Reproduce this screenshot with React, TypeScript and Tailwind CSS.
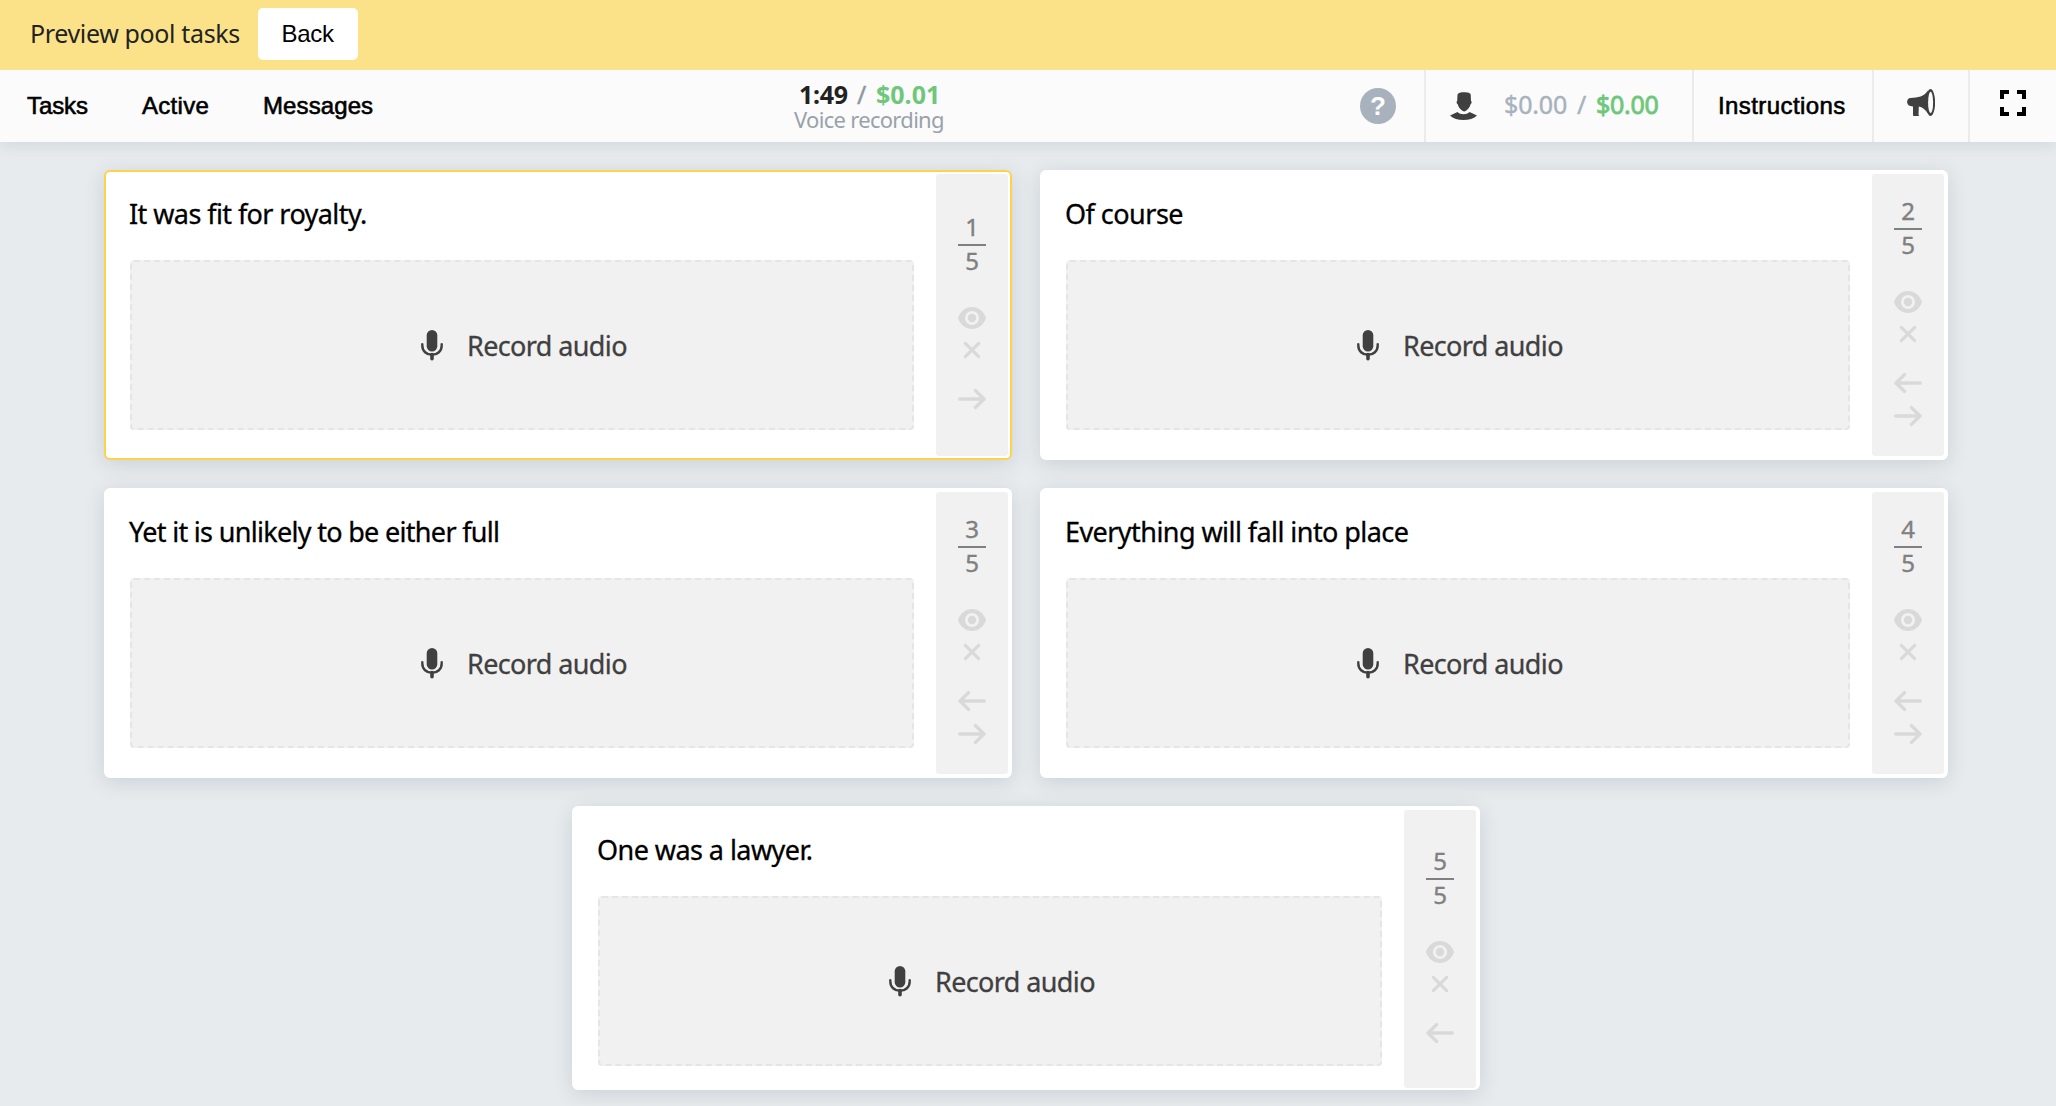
const sans = "font-['Noto_Sans',sans-serif]";
const helv = "font-['Liberation_Sans',Arial,sans-serif]";

type Task = {
  text: string;
  tracking: string;
  size: string;
  railPad: string;
  active?: boolean;
  prev?: boolean;
  next?: boolean;
};

const tasks: Task[] = [
  { text: 'It was fit for royalty.', tracking: 'tracking-[-0.58px]', size: 'h-[290px]', railPad: 'pt-[38px]', active: true, next: true },
  { text: 'Of course', tracking: 'tracking-[-0.52px]', size: 'h-[290px]', railPad: 'pt-[22px]', prev: true, next: true },
  { text: 'Yet it is unlikely to be either full', tracking: 'tracking-[-0.69px]', size: 'h-[290px]', railPad: 'pt-[22px]', prev: true, next: true },
  { text: 'Everything will fall into place', tracking: 'tracking-[-0.56px]', size: 'h-[290px]', railPad: 'pt-[22px]', prev: true, next: true },
  { text: 'One was a lawyer.', tracking: 'tracking-[-0.56px]', size: 'h-[284px]', railPad: 'pt-[36px]', prev: true },
];

function Eye() {
  return (
    <svg width="28" height="22" viewBox="0 0 28 22" fill="#d9d9d9">
      <path d="M0 11C2.200 4.200 7.600 0 14 0s11.800 4.200 14 11c-2.200 6.800-7.600 11-14 11S2.200 17.800 0 11z" />
      <circle cx="14" cy="11" r="7" fill="#f1f1f1" />
      <circle cx="14" cy="11" r="4.200" />
    </svg>
  );
}

function Cross() {
  return (
    <svg width="18" height="18" viewBox="0 0 18 18" stroke="#d9d9d9" strokeWidth="3.100" strokeLinecap="round">
      <path d="M2.300 2.300 15.700 15.700M15.700 2.300 2.300 15.700" />
    </svg>
  );
}

function Arrow({ left }: { left?: boolean }) {
  return (
    <svg
      width="28"
      height="22"
      viewBox="0 0 28 22"
      fill="none"
      stroke="#d9d9d9"
      strokeWidth="3.400"
      strokeLinecap="round"
      strokeLinejoin="round"
      className={left ? 'rotate-180' : ''}
    >
      <path d="M1.800 11H25.500M17.500 2.600 26 11 17.500 19.400" />
    </svg>
  );
}

function Mic() {
  return (
    <svg width="22" height="31" viewBox="0 0 22 31">
      <rect x="5.700" y="0" width="10.600" height="21.500" rx="5.300" fill="#404040" />
      <path d="M1.300 14.200v1.300c0 5.600 4.200 9.300 9.700 9.300s9.700-3.700 9.700-9.300v-1.300" fill="none" stroke="#404040" strokeWidth="2.400" strokeLinecap="round" />
      <path d="M11 24.500v4.300" stroke="#404040" strokeWidth="3.600" strokeLinecap="round" />
    </svg>
  );
}

function Card({ task, index }: { task: Task; index: number }) {
  return (
    <section
      className={`flex w-[908px] justify-between rounded-[6px] border-2 bg-white pl-6 pr-[2px] pt-[2px] shadow-[0_4px_20px_rgba(60,75,85,0.16)] ${task.size} ${task.active ? 'border-[#ffd24d] pb-[2px]' : index === 4 ? 'border-white' : 'border-white pb-[2px]'}`}
    >
      <div className="w-[784px] pt-6">
        <h2 className={`-ml-px h-8 whitespace-nowrap text-[27px] leading-8 text-black [-webkit-text-stroke:0.3px_#000] ${task.tracking}`}>{task.text}</h2>
        <button className="mt-[30px] flex h-[170px] w-full items-center rounded-[4px] border-2 border-dashed border-[#e5e5e5] bg-[#f1f1f1] pl-[289px] text-[#404040]">
          <Mic />
          <span className="ml-6 pt-[2px] text-[27px] leading-8 tracking-[-0.62px] [-webkit-text-stroke:0.3px_#404040]">Record audio</span>
        </button>
      </div>
      <aside className={`flex w-[72px] flex-col items-center rounded-[3px] bg-[#f1f1f1] ${task.railPad}`}>
        <div className="w-7 border-b-2 border-[#808080] pb-[2px] text-center text-[24px] leading-[30px] text-[#808080] [-webkit-text-stroke:0.4px_#808080]">{index + 1}</div>
        <div className="h-8 text-[24px] leading-[30px] text-[#808080] [-webkit-text-stroke:0.4px_#808080]">5</div>
        <div className="mt-6 flex h-8 items-center"><Eye /></div>
        <div className="flex h-8 items-center"><Cross /></div>
        <div className="mt-[17px] flex flex-col gap-px">
          {task.prev && <div className="flex h-8 items-center"><Arrow left /></div>}
          {task.next && <div className="flex h-8 items-center"><Arrow /></div>}
        </div>
      </aside>
    </section>
  );
}

function NavLink({ children, className }: { children: string; className: string }) {
  return <a className={`text-[24px] leading-8 text-black [-webkit-text-stroke:0.6px_#000] ${helv} ${className}`}>{children}</a>;
}

export default function App() {
  return (
    <div className={`flex h-[1106px] w-[2056px] flex-col overflow-hidden bg-[#e7ebee] ${sans}`}>
      <div className="z-20 flex h-[70px] shrink-0 items-center bg-[#fbe288] pl-[30px]">
        <span className="w-[228px] whitespace-nowrap pb-[5px] text-[25px] leading-8 tracking-[-0.36px] text-[#222]">Preview pool tasks</span>
        <button className={`mb-[2px] h-[52px] w-[100px] rounded-[5px] bg-white pr-px text-[24px] tracking-[-0.3px] text-black ${helv}`}>Back</button>
      </div>

      <header className="z-10 flex h-[72px] shrink-0 items-center bg-[#fbfbfb] shadow-[0_2px_16px_rgba(60,75,85,0.14)]">
        <nav className="flex w-[794px] items-center pl-[27px]">
          <NavLink className="w-[115px] tracking-[-0.1px]">Tasks</NavLink>
          <NavLink className="w-[121px] tracking-[0.3px]">Active</NavLink>
          <NavLink className="tracking-[0.1px]">Messages</NavLink>
        </nav>
        <div className="w-[566px]">
          <div className="flex h-[26px] pl-[5px] text-[25px] leading-[26px]">
            <span className="w-[58px] font-bold tracking-[-0.3px] text-[#222]">1:49</span>
            <span className="w-[19px] text-[#8e979f] [-webkit-text-stroke:0.4px_#8e979f]">/</span>
            <span className="font-bold text-[#6ec77a]">$0.01</span>
          </div>
          <div className="whitespace-nowrap text-[22px] leading-6 tracking-[-0.7px] text-[#99a2ab]">Voice recording</div>
        </div>
        <div className="flex h-full w-[64px] items-center">
          <span className={`flex size-9 items-center justify-center rounded-full bg-[#a7b2bc] text-[26px] font-bold leading-9 text-white ${helv}`}>?</span>
        </div>
        <div className="flex h-full w-[268px] items-center border-l-2 border-[#ebebeb] pl-6 text-[25px] leading-8">
          <svg width="27" height="28" viewBox="0 0 27 28" fill="#404040" className="mr-[27px]">
            <path d="M7.500 2.500C9 .2 12 .2 14.500.3c3 0 6 .8 6.200 2.200L21 9c1 .2.800 2.400-.4 3.300-.8 3-2.800 5.500-5 6.700-.7.500-2 .5-2.800 0-2.400-1.300-4.300-3.700-5.100-6.700C6.400 11.400 6.200 9.300 7.200 9z" />
            <path d="M0 23.400 7.500 20c1.500 1.300 3.600 2.300 6 2.300s4.500-1 6-2.300L27 23.400C24 26.600 19 28 13.500 28S3 26.600 0 23.400z" />
          </svg>
          <span className="mb-[5px] w-[73px] tracking-[-0.15px] text-[#a7b2bc] [-webkit-text-stroke:0.4px_#a7b2bc]">$0.00</span>
          <span className="mb-[5px] w-[19px] text-[#a7b2bc] [-webkit-text-stroke:0.4px_#a7b2bc]">/</span>
          <span className="mb-[5px] tracking-[-0.3px] text-[#6ec77a] [-webkit-text-stroke:0.8px_#6ec77a]">$0.00</span>
        </div>
        <div className="flex h-full w-[180px] items-center border-l-2 border-[#ebebeb] pl-6">
          <NavLink className="tracking-[0.42px]">Instructions</NavLink>
        </div>
        <div className="flex h-full w-[96px] items-center border-l-2 border-[#ebebeb] pb-[7px] pl-[33px]">
          <svg width="28" height="27" viewBox="0 0 28 27" fill="#404040">
            <path d="M3.500 9C11 8.800 17 7.500 21 1.500L21 24.500C18 20.500 15.500 18.300 11.800 17.500L11.500 25.500Q11.500 26.800 12.500 27H6.800Q6 27 6 26V17.500L3.500 17C-1 16.500-1 9 3.500 9z" />
            <ellipse cx="23.500" cy="13.500" rx="4.600" ry="13.500" />
            <ellipse cx="23.600" cy="13.500" rx="2.500" ry="10.700" fill="#fbfbfb" />
          </svg>
        </div>
        <div className="flex h-full w-[88px] items-center border-l-2 border-[#ebebeb] pb-[6px] pl-[30px]">
          <svg width="26" height="26" viewBox="0 0 26 26" fill="none" stroke="#000" strokeWidth="4">
            <path d="M2 9V2H9M17 2H24V9M24 17V24H17M9 24H2V17" />
          </svg>
        </div>
      </header>

      <main className="flex flex-wrap content-start justify-center gap-7 pl-[40px] pr-[44px] pt-7">
        {tasks.map((task, i) => (
          <Card key={task.text} task={task} index={i} />
        ))}
      </main>
    </div>
  );
}
